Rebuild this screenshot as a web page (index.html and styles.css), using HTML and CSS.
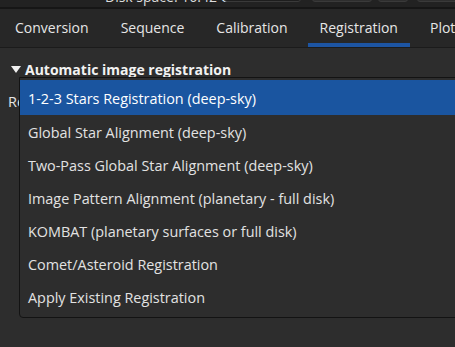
FILE: index.html
```html
<!DOCTYPE html>
<html>
<head>
<title>Registration</title>
<meta name="viewport" content="width=device-width, initial-scale=1">
<link rel="stylesheet" href="styles.css">
</head>
<body>

<div class="topstrip">
  <span class="disk">Disk space: 16.42 GiB</span>
  <span class="field"></span>
  <span class="btn b1"></span>
  <span class="btn b2"></span>
  <span class="btn b3"></span>
</div>

<div class="tabbar">
  <div class="tab">Conversion</div>
  <div class="tab">Sequence</div>
  <div class="tab">Calibration</div>
  <div class="tab active">Registration</div>
  <div class="tab">Plot</div>
</div>

<div class="page">
  <div class="section">
    <span class="arrow"></span>
    <b>Automatic image registration</b>
  </div>
  <div class="row">Registration method</div>

  <!-- open combo box list -->
  <ul class="popup">
    <li class="selected">1-2-3 Stars Registration (deep-sky)</li>
    <li>Global Star Alignment (deep-sky)</li>
    <li>Two-Pass Global Star Alignment (deep-sky)</li>
    <li>Image Pattern Alignment (planetary - full disk)</li>
    <li>KOMBAT (planetary surfaces or full disk)</li>
    <li>Comet/Asteroid Registration</li>
    <li>Apply Existing Registration</li>
  </ul>
</div>

</body>
</html>
```

FILE: styles.css
```css
body {
  margin: 0;
  width: 455px;
  height: 347px;
  overflow: hidden;
  background-color: #2d2d2d;
  color: #e4e4e4;
  font-family: "Open Sans", "Noto Sans", sans-serif;
  font-size: 14px;
}

/* strip of the toolbar above, mostly cut off */
.topstrip {
  height: 7px;
  background-color: #222222;
  border-bottom: 2px solid #161616;
  overflow: hidden;
  position: relative;
}

.disk {
  position: absolute;
  left: 105px;
  bottom: 3px;
  font-size: 14px;
  line-height: 14px;
  color: #dcdcdc;
  white-space: nowrap;
}

.field, .btn {
  position: absolute;
  top: -10px;
  height: 10px;
  border: 1px solid #3a3a3a;
  border-radius: 3px;
  background-color: #1e1e1e;
}

.field { left: 224px; width: 75px; }
.b1 { left: 312px; width: 58px; background-color: #2e2e2e; }
.b2 { left: 378px; width: 28px; background-color: #2e2e2e; }
.b3 { left: 417px; width: 60px; background-color: #2e2e2e; }

.tabbar {
  height: 38px;
  background-color: #272727;
  border-bottom: 1px solid #1b1b1b;
  display: flex;
  gap: 8px;
  padding-left: 3px;
  white-space: nowrap;
  overflow: hidden;
}

.tab {
  padding: 0 12px;
  line-height: 37px;
  font-size: 14px;
  color: #e6e6e6;
  border-bottom: 4px solid transparent;
  box-sizing: border-box;
  height: 38px;
}

.tab.active {
  border-bottom-color: #1d55a3;
}

.page {
  position: relative;
  padding: 12px 8px;
}

.section {
  display: flex;
  align-items: center;
  gap: 4px;
  font-size: 14px;
  color: #f2f2f2;
  line-height: 19px;
  padding-left: 3px;
}

.arrow {
  width: 0;
  height: 0;
  border-left: 5px solid transparent;
  border-right: 5px solid transparent;
  border-top: 7px solid #f0f0f0;
}

.row {
  margin-top: 13px;
  font-size: 14.5px;
}

.popup {
  position: absolute;
  left: 19px;
  top: 29px;
  width: 460px;
  margin: 0;
  padding: 2px 0 4px 0;
  list-style: none;
  background-color: #2d2d2d;
  border: 1px solid #131313;
  border-radius: 0 0 0 4px;
  font-size: 14.4px;
  color: #e2e2e2;
}

.popup li {
  height: 33px;
  line-height: 35px;
  padding-left: 8px;
  white-space: nowrap;
}

.popup li:first-child {
  height: 35px;
  line-height: 38px;
}

.popup li.selected {
  background-color: #1a55a0;
  color: #ffffff;
}
```
